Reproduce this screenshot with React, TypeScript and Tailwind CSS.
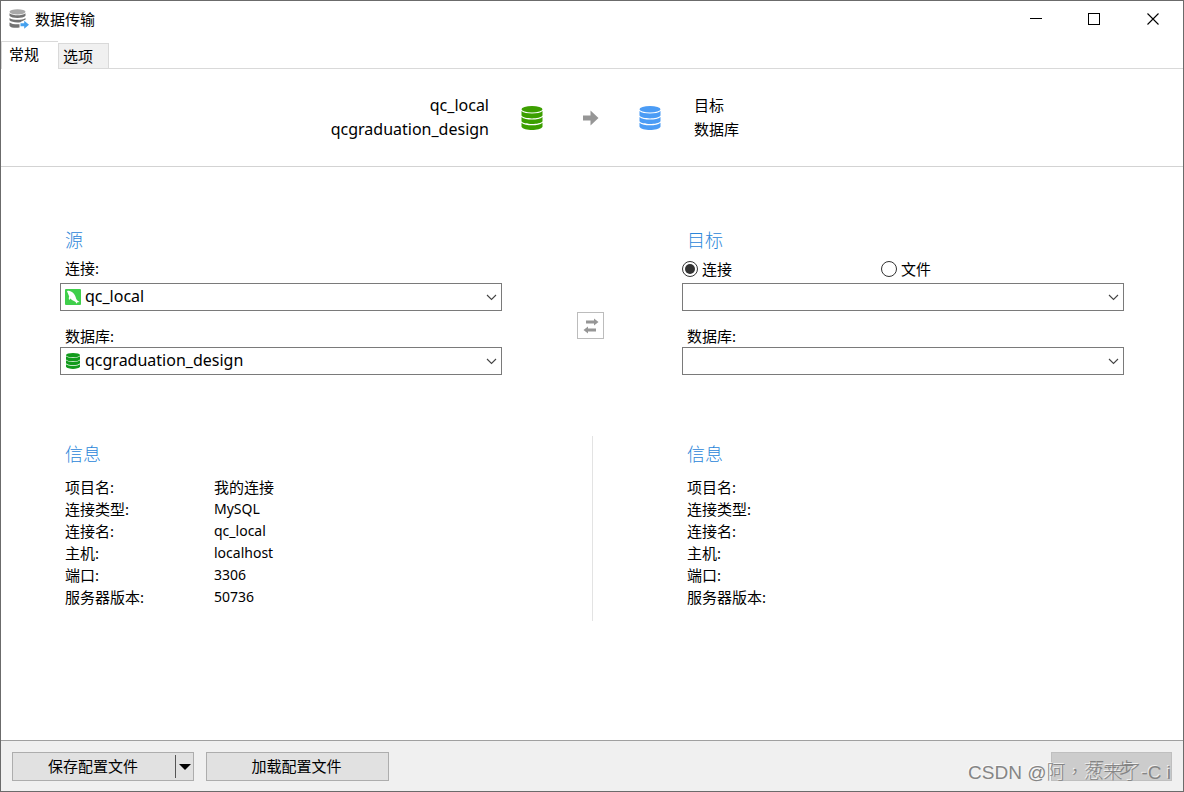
import { useState, type ReactNode } from "react";

interface InfoRow {
  label: string;
  value: string;
}

const sourceInfo: InfoRow[] = [
  { label: "项目名:", value: "我的连接" },
  { label: "连接类型:", value: "MySQL" },
  { label: "连接名:", value: "qc_local" },
  { label: "主机:", value: "localhost" },
  { label: "端口:", value: "3306" },
  { label: "服务器版本:", value: "50736" },
];

const targetInfo: InfoRow[] = sourceInfo.map((row) => ({ label: row.label, value: "" }));

function DatabaseIcon({ className }: { className: string }) {
  return (
    <svg viewBox="0 0 22 24" className={className} fill="currentColor" aria-hidden="true">
      <ellipse cx="11" cy="3.200" rx="10.500" ry="3.200" />
      <path d="M.5 5c2 2 6 2.400 10.500 2.400S19.500 7 21.500 5v4.600c-1 2-6 2.800-10.500 2.800S1.500 11.600.5 9.600z" />
      <path d="M.5 10.900c2 2 6 2.500 10.500 2.500s8.500-.5 10.500-2.500v4.400c-1 2-6 2.700-10.500 2.700S1.500 17.300.5 15.300z" />
      <path d="M.5 16.700c2 2 6 2.500 10.500 2.500s8.500-.5 10.500-2.500v4.100c-1 2.200-6 3.200-10.500 3.200S1.500 23 .5 20.800z" />
    </svg>
  );
}

function TransferIcon() {
  return (
    <svg viewBox="0 0 20 20" className="h-5 w-5" aria-hidden="true">
      <ellipse cx="8.500" cy="2.800" rx="8" ry="2.600" fill="#a8a8a8" />
      <g fill="#737373">
        <path d="M.5 4.200c2 1.600 5 2 8 2s6-.4 8-2v2.600c-1 1.500-4.500 2.200-8 2.200S1.500 8.300.5 6.800z" />
        <path d="M.5 8.900c2 1.500 5 1.900 8 1.900s6-.4 8-1.900v1.800c-2 .6-4 1.700-5 2.500-4 .6-9.500 0-11-1.900z" />
        <path d="M.5 13.400c2 1.500 5 1.900 10 1.800v3.400c-4 .6-9 .2-10-1.900z" />
      </g>
      <path d="M11.500 14.300h3.700v-2.500l4.800 4-4.800 4v-2.500h-3.700z" fill="#45a1ee" />
    </svg>
  );
}

function DolphinIcon() {
  return (
    <svg viewBox="0 0 16 16" className="h-4 w-4" aria-hidden="true">
      <rect width="16" height="16" rx="1" fill="#3fcf4b" />
      <path
        d="M2 2.300c1-.7 2.600-.5 4 .3 2.400 1.200 4.200 3.400 4.800 6 .2 1.200.7 2 1.600 2.900l2.100 1.500-2.100.3-.8 1.500c-.6-1.300-1.300-2.200-2.600-2.700-1.400-.5-2.700-1.300-3.600-2.500l-1.100 1.500c-.7-1.300-.6-2.500-.1-3.600C3.500 6 3 4.400 2 2.300z"
        fill="white"
      />
    </svg>
  );
}

function ArrowIcon() {
  return (
    <svg viewBox="0 0 16 16" className="h-4 w-4 text-[#969696]" fill="currentColor" aria-hidden="true">
      <path d="M0 5.500h7.500V.5L15.500 8l-8 7.500v-5H0z" />
    </svg>
  );
}

interface ComboProps {
  id: string;
  value?: string;
  label?: string;
  icon?: ReactNode;
}

function Combo({ id, value = "", label, icon }: ComboProps) {
  return (
    <div className="relative h-7">
      <select
        id={id}
        aria-label={label}
        defaultValue={value}
        className="h-full w-full appearance-none border border-[#7a7a7a] bg-white pr-7 pb-0.5 pl-6 text-[16px] leading-5 outline-none"
      >
        <option value={value}>{value}</option>
      </select>
      {icon && <span className="pointer-events-none absolute inset-y-0 left-[5px] flex items-center">{icon}</span>}
      <span className="pointer-events-none absolute inset-y-0 right-[5px] flex items-center">
        <svg viewBox="0 0 11 7" className="h-[7px] w-[11px]" fill="none" stroke="#444" strokeWidth="1.100">
          <path d="M1 1l4.500 4.500L10 1" />
        </svg>
      </span>
    </div>
  );
}

function InfoPanel({ rows }: { rows: InfoRow[] }) {
  return (
    <section className="min-w-0 flex-1 pl-[5px]">
      <h2 className="mb-1 text-lg leading-9 font-light text-[#2b86d9]">信息</h2>
      <dl>
        {rows.map((row, idx) => (
          <div key={row.label} className="flex leading-[22px]">
            <dt className="w-[149px] shrink-0">{row.label}</dt>
            <dd className={idx === 0 ? "text-[15px]" : "text-[14px]"}>{row.value}</dd>
          </div>
        ))}
      </dl>
    </section>
  );
}

const winButton = "flex h-9 w-[59px] items-center justify-center hover:bg-gray-200";
const radio =
  "h-4 w-4 appearance-none rounded-full border border-[#333] bg-white bg-clip-content p-[2px] checked:bg-[#333]";

export default function App() {
  const [tab, setTab] = useState("general");
  const [target, setTarget] = useState("connection");

  return (
    <div className="flex min-h-screen flex-col border border-[#6b6b6b] bg-white font-['Noto_Sans','Noto_Sans_CJK_SC',sans-serif] text-[15px] leading-6 text-black">
      <header className="flex h-9 items-center pl-2">
        <TransferIcon />
        <h1 className="ml-1.5 flex-1">数据传输</h1>
        <button aria-label="最小化" className={winButton}>
          <svg viewBox="0 0 13 13" className="h-[13px] w-[13px]" stroke="black" shapeRendering="crispEdges">
            <path d="M1 5.500h12" />
          </svg>
        </button>
        <button aria-label="最大化" className={winButton}>
          <svg viewBox="0 0 13 13" className="h-[13px] w-[13px]" fill="none" stroke="black" shapeRendering="crispEdges">
            <path d="M.5.5h11v11H.5z" />
          </svg>
        </button>
        <button aria-label="关闭" className={winButton}>
          <svg viewBox="0 0 13 13" className="h-[13px] w-[13px]" stroke="black" strokeWidth="1.100">
            <path d="M.5.5l11 11M11.500.5l-11 11" />
          </svg>
        </button>
      </header>

      <div role="tablist" className="mt-1 flex h-7 shrink-0 items-end">
        <button
          role="tab"
          aria-selected={tab === "general"}
          onClick={() => setTab("general")}
          className="h-7 w-[57px] border-t border-l border-[#d9d9d9] pb-1 pl-[7px] text-left"
        >
          常规
        </button>
        <button
          role="tab"
          aria-selected={tab === "options"}
          onClick={() => setTab("options")}
          className="h-[26px] w-[51px] border border-[#d9d9d9] bg-[#f0f0f0] pb-0.5 pl-1 text-left"
        >
          选项
        </button>
        <div className="flex-1 self-stretch border-b border-[#d9d9d9]" />
      </div>

      <section className="grid h-[98px] shrink-0 grid-cols-[1fr_140px_1fr] items-center border-b border-[#d3d3d3] pr-0.5">
        <div className="pr-8 pb-0.5 text-right text-[16px]">
          <p>qc_local</p>
          <p>qcgraduation_design</p>
        </div>
        <div className="flex items-center justify-between">
          <DatabaseIcon className="h-6 w-[22px] text-[#3c9f00]" />
          <ArrowIcon />
          <DatabaseIcon className="h-6 w-[22px] text-[#4b9cf5]" />
        </div>
        <div className="pb-0.5 pl-[33px]">
          <p>目标</p>
          <p>数据库</p>
        </div>
      </section>

      <main className="flex-1 px-[59px] pt-[60px]">
        <div className="flex">
          <section className="min-w-0 flex-1">
            <h2 className="pb-0.5 pl-[5px] text-lg leading-[26px] font-light text-[#2b86d9]">源</h2>
            <label htmlFor="source-connection" className="block pb-0.5 pl-[5px] leading-[26px]">
              连接:
            </label>
            <Combo id="source-connection" value="qc_local" icon={<DolphinIcon />} />
            <label htmlFor="source-database" className="mt-[14px] block pl-[5px] leading-[22px]">
              数据库:
            </label>
            <Combo
              id="source-database"
              value="qcgraduation_design"
              icon={<DatabaseIcon className="h-4 w-4 text-[#119b1c]" />}
            />
          </section>

          <div className="flex w-[180px] shrink-0 justify-center pt-[85px] pr-[3px]">
            <button
              aria-label="交换"
              className="flex h-[27px] w-[27px] items-center justify-center border border-[#bcbcbc] bg-white"
            >
              <svg viewBox="0 0 16 16" className="h-4 w-4" fill="#969696">
                <path d="M3 2.500h8V.5l4.500 3.500L11 7.500v-2H3zM13 10.500H5v-2L.5 12 5 15.500v-2h8z" />
              </svg>
            </button>
          </div>

          <section className="min-w-0 flex-1">
            <h2 className="pb-0.5 pl-[5px] text-lg leading-[26px] font-light text-[#2b86d9]">目标</h2>
            <div className="flex h-7 items-center">
              <label className="flex w-[199px] items-center gap-1">
                <input
                  type="radio"
                  name="target"
                  className={radio}
                  checked={target === "connection"}
                  onChange={() => setTarget("connection")}
                />
                连接
              </label>
              <label className="flex items-center gap-1">
                <input
                  type="radio"
                  name="target"
                  className={radio}
                  checked={target === "file"}
                  onChange={() => setTarget("file")}
                />
                文件
              </label>
            </div>
            <Combo id="target-connection" label="目标连接" />
            <label htmlFor="target-database" className="mt-[14px] block pl-[5px] leading-[22px]">
              数据库:
            </label>
            <Combo id="target-database" />
          </section>
        </div>

        <div className="mt-[61px] flex">
          <InfoPanel rows={sourceInfo} />
          <div className="flex h-[185px] w-[180px] shrink-0 justify-center">
            <div className="border-l border-[#e3e3e3]" />
          </div>
          <InfoPanel rows={targetInfo} />
        </div>
      </main>

      <footer className="relative flex shrink-0 gap-3 border-t border-[#a0a0a0] bg-[#f0f0f0] px-[11px] pt-[11px] pb-[10px]">
        <div className="flex h-[29px] w-[182px] items-center border border-[#adadad] bg-[#e1e1e1]">
          <button className="h-full flex-1 pr-0.5 pb-0.5">保存配置文件</button>
          <button aria-label="更多" className="flex h-[23px] w-[18px] items-center justify-center border-l border-[#555]">
            <svg viewBox="0 0 12 6" className="h-1.5 w-3">
              <path d="M0 0h12L6 6z" />
            </svg>
          </button>
        </div>
        <button className="h-[29px] w-[183px] border border-[#adadad] bg-[#e1e1e1] pr-0.5 pb-0.5 hover:bg-[#e5f1fb]">
          加载配置文件
        </button>
        <button disabled className="ml-auto h-[29px] w-[121px] border border-[#bfbfbf] bg-[#cccccc] text-[#838383]">
          下一步
        </button>
        <span className="pointer-events-none absolute right-3 bottom-1.5 font-['Liberation_Sans','Noto_Sans_CJK_TC',sans-serif] text-[19px] leading-6 font-light whitespace-nowrap text-[#858585] [text-shadow:-1px_-1px_0_#ffffffb0]">
          CSDN @阿，葱来了-C i
        </span>
      </footer>
    </div>
  );
}
